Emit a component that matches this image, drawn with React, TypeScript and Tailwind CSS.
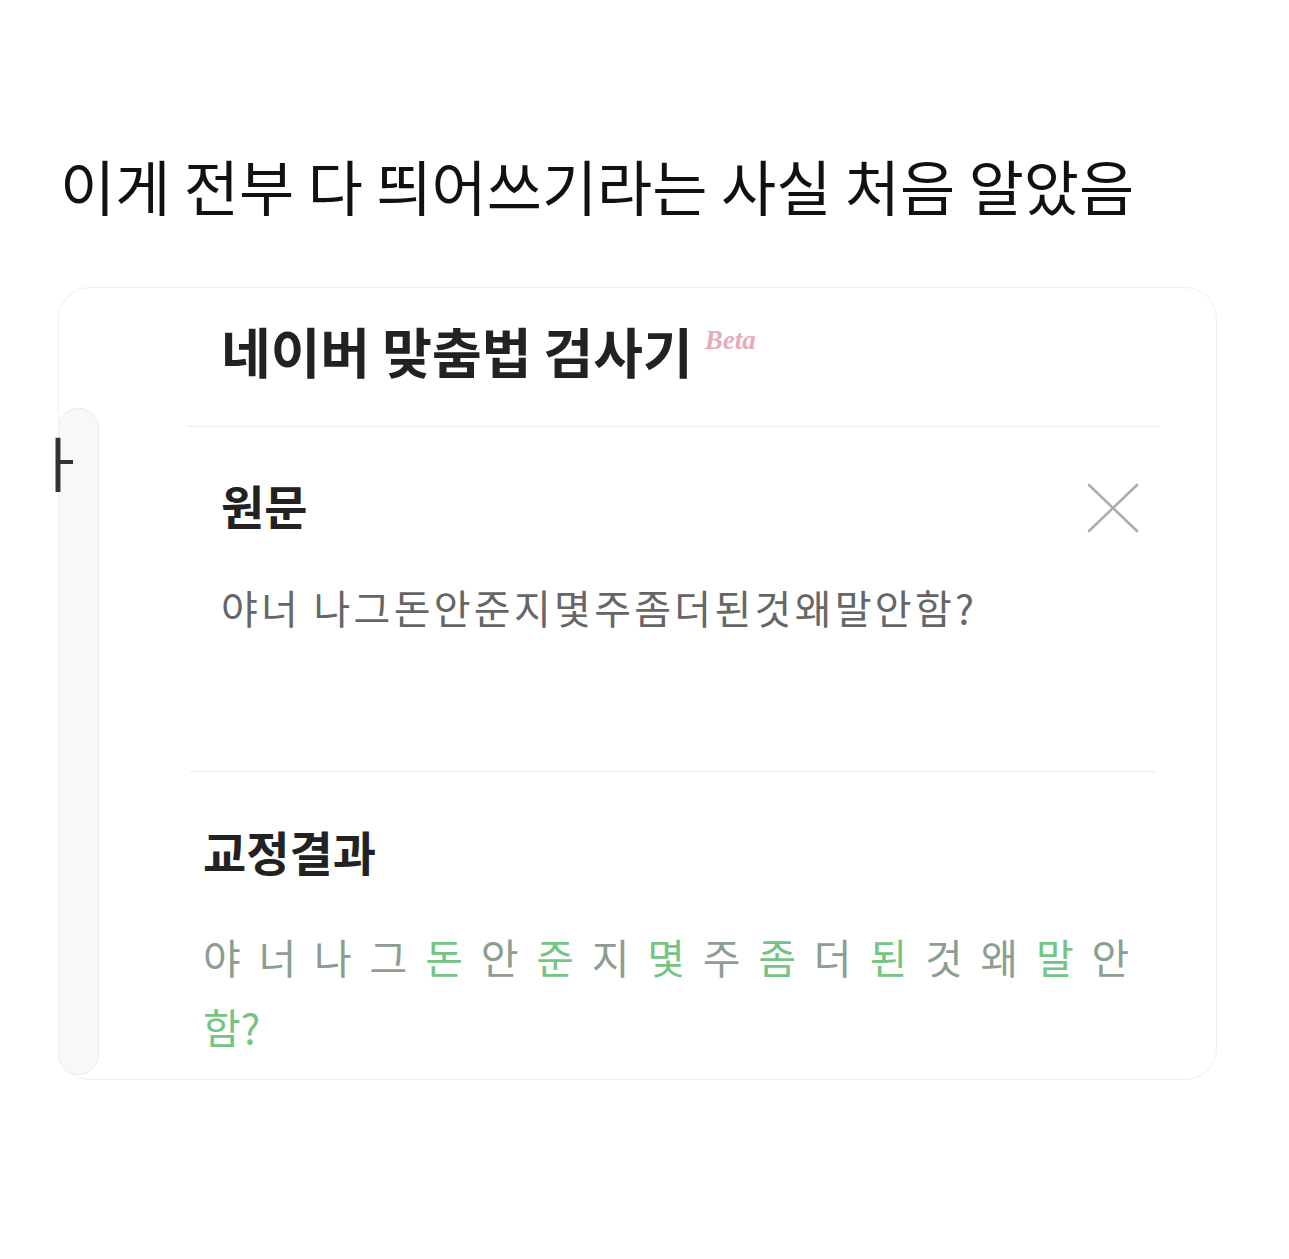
import { Fragment } from "react";

type Token = { text: string; hit?: boolean };

// 교정결과: 띄어쓰기로 고쳐진 글자는 초록색으로 표시
const corrected: Token[] = [
  { text: "야" },
  { text: "너" },
  { text: "나" },
  { text: "그" },
  { text: "돈", hit: true },
  { text: "안" },
  { text: "준", hit: true },
  { text: "지" },
  { text: "몇", hit: true },
  { text: "주" },
  { text: "좀", hit: true },
  { text: "더" },
  { text: "된", hit: true },
  { text: "것" },
  { text: "왜" },
  { text: "말", hit: true },
  { text: "안" },
  { text: "함?", hit: true },
];

function CloseIcon() {
  return (
    <svg width="54" height="52" viewBox="0 0 54 52" fill="none">
      <path d="M3 3 L51 49 M51 3 L3 49" stroke="#adadad" strokeWidth="2.6" strokeLinecap="round" />
    </svg>
  );
}

export default function App() {
  return (
    <div className="min-h-[1259px] w-full bg-white pt-[150px] font-['Noto_Sans_CJK_KR',sans-serif]">
      <h1 className="pl-[60px] text-[60px] leading-[70px] font-normal text-[#111]">
        이게 전부 다 띄어쓰기라는 사실 처음 알았음
      </h1>

      <div className="relative ml-[58px] mt-[67px] h-[793px] w-[1159px] rounded-[32px] border border-[#efefef] bg-white">
        {/* 뒤에 겹친 패널의 가장자리 */}
        <div className="absolute left-[-1px] top-[120px] bottom-[4px] w-[41px] rounded-[20px] border border-[#ececec] bg-[#f8f8f8]" />
        <span className="absolute left-[-27px] top-[138px] text-[60px] leading-[70px] text-[#333]">ㅏ</span>

        <div className="ml-[128px] w-[973px]">
          {/* 헤더 */}
          <div className="flex h-[138px] items-start pt-[33px] pl-[34px]">
            <span className="text-[54px] leading-[60px] font-semibold text-[#222]">네이버 맞춤법 검사기</span>
            <span className="ml-[12px] mt-[4px] font-['Liberation_Serif',serif] text-[27px] font-semibold italic leading-[30px] text-[#e9aabb]">
              Beta
            </span>
          </div>
          <div className="h-px bg-[#ececec]" />

          {/* 원문 */}
          <div className="pl-[34px] pr-[20px] pt-[50px]">
            <div className="flex h-[56px] items-center justify-between">
              <span className="text-[47px] leading-[56px] font-bold text-[#222]">원문</span>
              <div className="mt-[6px]">
                <CloseIcon />
              </div>
            </div>
            <p className="mt-[50px] text-[40px] leading-[48px] tracking-[3.3px] text-[#666]">
              야너 나그돈안준지몇주좀더된것왜말안함?
            </p>
          </div>

          <div className="mt-[140px] ml-[3px] mr-[5px] h-px bg-[#ececec]" />

          {/* 교정결과 */}
          <div className="pl-[16px] pt-[51px]">
            <div className="text-[47px] leading-[56px] font-bold text-[#222]">교정결과</div>
            <p className="mt-[42px] text-[41px] leading-[70px] [word-spacing:8.6px]">
              {corrected.map((t, i) => (
                <Fragment key={i}>
                  {i > 0 && " "}
                  <span className={t.hit ? "text-[#74c583]" : "text-[#8c9e90]"}>{t.text}</span>
                </Fragment>
              ))}
            </p>
          </div>
        </div>
      </div>
    </div>
  );
}
